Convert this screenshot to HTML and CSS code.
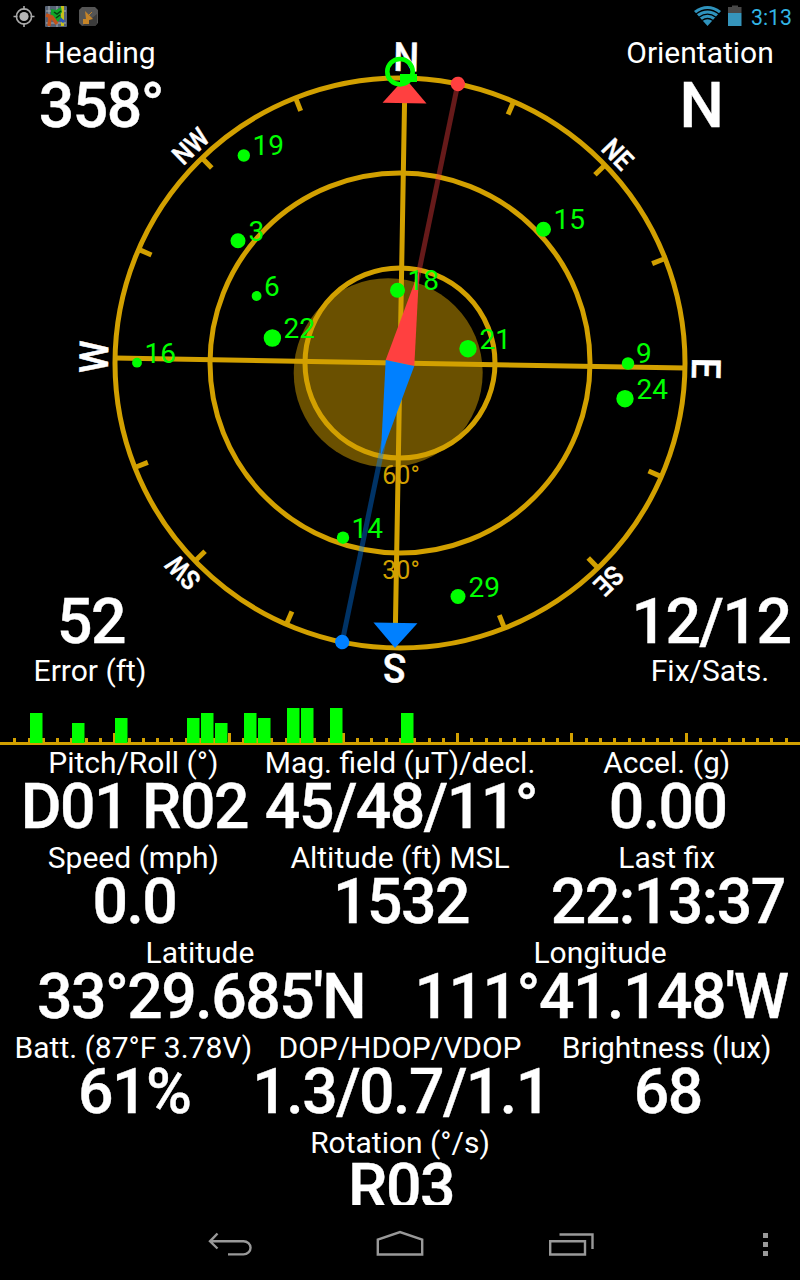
FILE: index.html
```html
<!DOCTYPE html>
<html lang="en">
<head>
    <meta charset="utf-8">
    <title>GPS Status</title>
    <link rel="stylesheet" href="styles.css">
</head>
<body>
    <header class="statusbar">
        <svg class="notifications" width="110" height="32" viewBox="0 0 110 32">
            <g fill="none" stroke="#a9a9a9" stroke-width="1.6">
                <circle cx="24" cy="16.500" r="7.600"/>
                <path d="M24 6v4M24 23v4M13.500 16.500h4M30.500 16.500h4"/>
            </g>
            <circle cx="24" cy="16.500" r="4.600" fill="#b5b5b5"/>
            <rect x="45" y="6" width="22" height="21" rx="1" fill="#566275"/>
            <path d="M46 11h20M46 23h20M49 6v21M57 6v21" stroke="#aab0b4" stroke-width="1"/>
            <path d="M62.500 6v20" stroke="#c9c21a" stroke-width="3"/>
            <path d="M51 9l5 1 5-3 1 5-2 3 2 4-5 3-6-6z" fill="#0fa52a"/>
            <path d="M54 12l3 2 4-3M56 18l4-3" stroke="#063f10" stroke-width="1.500" fill="none"/>
            <path d="M46 15l6 2 5 7M50 17l-1 9" stroke="#c2521b" stroke-width="3.500" fill="none"/>
            <path d="M60 19l4 3" stroke="#2a55c0" stroke-width="3"/>
            <path d="M79 10l3-3h13l3 3v13l-3 3h-13l-3-3z" fill="#555"/>
            <path d="M82 26l15-12v10l-2 2z" fill="#3c3c3c"/>
            <path d="M85 11l8 8-4 1v4h-6v-5h3z" fill="#c58428"/>
            <path d="M89 15l3-3" stroke="#c58428"/>
        </svg>
        <div class="status">
            <svg width="48" height="32" viewBox="0 0 48 32">
                <path d="M0 11Q13.500 1 27 11L13.500 26z" fill="#2f93bd"/>
                <path d="M2 14Q13.500 5.500 25 14M5 17.300Q13.500 11 22 17.300M8 20.500Q13.500 16.500 19 20.500" fill="none" stroke="#000" stroke-width="1.300"/>
                <path d="M34 7h4V5.500h6V7h3.500v6H34z" fill="#484848"/>
                <path d="M34 13h13.500v13H34z" fill="#3594bb"/>
            </svg>
            <span class="clock">3:13</span>
        </div>
    </header>

    <main class="app">
        <section class="radar">
            <svg class="compass" width="800" height="668" viewBox="0 32 800 668">
                <circle cx="388.200" cy="372.700" r="94.500" class="tilt"/>
                <g transform="translate(400 363)">
                    <g class="grid-lines">
                        <circle r="285"/>
                        <circle r="190"/>
                        <circle r="95"/>
                        <g transform="rotate(1)">
                            <path d="M0 -262V262M-285 0H285"/>
                            <path id="tick" d="M0 -285V-271" transform="rotate(22.500)"/>
                            <use href="#tick" transform="rotate(22.500)"/>
                            <use href="#tick" transform="rotate(45)"/>
                            <use href="#tick" transform="rotate(90)"/>
                            <use href="#tick" transform="rotate(112.500)"/>
                            <use href="#tick" transform="rotate(135)"/>
                            <use href="#tick" transform="rotate(180)"/>
                            <use href="#tick" transform="rotate(202.500)"/>
                            <use href="#tick" transform="rotate(225)"/>
                            <use href="#tick" transform="rotate(270)"/>
                            <use href="#tick" transform="rotate(292.500)"/>
                            <use href="#tick" transform="rotate(315)"/>
                        </g>
                    </g>
                    <g class="ring-text">
                        <text x="1" y="121">60°</text>
                        <text x="1" y="216">30°</text>
                    </g>
                    <g transform="rotate(1)">
                        <g class="cardinal">
                            <text x="1" y="-292" transform="scale(.9 1)">N</text>
                            <text y="-292" transform="rotate(90) scale(.93 1)">E</text>
                            <text y="-291" transform="rotate(180) scale(.95 1)">S</text>
                            <text x="1" y="-292" transform="rotate(270) scale(.92 1)">W</text>
                        </g>
                        <g class="ordinal">
                            <text x="1" y="-292" transform="rotate(45) scale(.9 1)">NE</text>
                            <text x="1" y="-292" transform="rotate(135) scale(.9 1)">SE</text>
                            <text y="-292" transform="rotate(225) scale(.9 1)">SW</text>
                            <text y="-292" transform="rotate(315) scale(.9 1)">NW</text>
                        </g>
                        <path class="red" d="M0 -285L22 -260H-22z"/>
                        <path class="blue" d="M0 285L22 260H-22z"/>
                    </g>
                    <!-- magnetic needle -->
                    <g transform="rotate(11.700)">
                        <path class="red-line" d="M0 -285V-80"/>
                        <path class="blue-line" d="M0 285V80"/>
                        <path class="red" d="M-14.600 0L0 -95L14.600 0z"/>
                        <path class="blue" d="M-14.600 0L0 95L14.600 0z"/>
                        <circle class="red" cy="-285" r="7.200"/>
                        <circle class="blue" cy="285" r="7.200"/>
                    </g>
                </g>
                <circle cx="400" cy="71.700" r="12.700" class="sun"/>
                <rect x="400" y="74" width="17" height="8" fill="#0f0"/>
                <g class="sats">
                    <circle cx="243.800" cy="155.500" r="6.200"/><text x="252.500" y="155">19</text>
                    <circle cx="238" cy="240.800" r="7.500"/><text x="248.500" y="241">3</text>
                    <circle cx="256.600" cy="296" r="4.900"/><text x="264" y="296">6</text>
                    <circle cx="272.400" cy="338" r="8.700"/><text x="283.500" y="338">22</text>
                    <circle cx="137" cy="362.700" r="4.900"/><text x="144.500" y="363">16</text>
                    <circle cx="397.500" cy="290.300" r="7.500"/><text x="407.500" y="290">18</text>
                    <circle cx="468" cy="348.700" r="8.700"/><text x="479.500" y="349">21</text>
                    <circle cx="543.500" cy="229.300" r="7.500"/><text x="553.500" y="229">15</text>
                    <circle cx="628" cy="363.500" r="6.200"/><text x="636" y="363">9</text>
                    <circle cx="625" cy="398.700" r="8.700"/><text x="636.500" y="399">24</text>
                    <circle cx="343" cy="537.700" r="6.200"/><text x="351.500" y="538">14</text>
                    <circle cx="458" cy="596.500" r="7.500"/><text x="468.500" y="597">29</text>
                </g>
            </svg>
            <div class="corner heading">
                <div class="label">Heading</div>
                <div class="value">358°</div>
            </div>
            <div class="corner orientation">
                <div class="label">Orientation</div>
                <div class="value">N</div>
            </div>
            <div class="corner error">
                <div class="value">52</div>
                <div class="label">Error (ft)</div>
            </div>
            <div class="corner fix">
                <div class="value">12/12</div>
                <div class="label">Fix/Sats.</div>
            </div>
        </section>

        <svg class="signal" id="signal" width="800" height="45" viewBox="0 700 800 45"></svg>

        <section class="readouts">
            <div class="row">
                <div class="cell"><div class="label">Pitch/Roll (°)</div><div class="value">D01 R02</div></div>
                <div class="cell"><div class="label">Mag. field (µT)/decl.</div><div class="value">45/48/11°</div></div>
                <div class="cell"><div class="label">Accel. (g)</div><div class="value">0.00</div></div>
            </div>
            <div class="row">
                <div class="cell"><div class="label">Speed (mph)</div><div class="value">0.0</div></div>
                <div class="cell"><div class="label">Altitude (ft) MSL</div><div class="value">1532</div></div>
                <div class="cell"><div class="label">Last fix</div><div class="value">22:13:37</div></div>
            </div>
            <div class="row">
                <div class="cell"><div class="label">Latitude</div><div class="value">33°29.685'N</div></div>
                <div class="cell"><div class="label">Longitude</div><div class="value">111°41.148'W</div></div>
            </div>
            <div class="row">
                <div class="cell"><div class="label">Batt. (87°F 3.78V)</div><div class="value">61%</div></div>
                <div class="cell"><div class="label">DOP/HDOP/VDOP</div><div class="value">1.3/0.7/1.1</div></div>
                <div class="cell"><div class="label">Brightness (lux)</div><div class="value">68</div></div>
            </div>
            <div class="row">
                <div class="cell"><div class="label">Rotation (°/s)</div><div class="value">R03</div></div>
            </div>
        </section>
    </main>

    <nav class="navbar">
        <svg width="46" height="28" viewBox="207 1230 46 28">
            <path d="M210 1241.300H243.500a7 6.500 0 0 1 0 13.100H228M217.500 1233.500L210 1241.300L217.500 1248.500"/>
        </svg>
        <svg width="50" height="28" viewBox="375 1230 50 28">
            <path d="M377.800 1254.500V1239.500L400 1232L422.200 1239.500V1254.500z"/>
        </svg>
        <svg width="48" height="28" viewBox="547 1230 48 28">
            <path d="M550.200 1241.200H585V1254.500H550.200zM559.500 1234.500H592.500V1249"/>
        </svg>
        <div class="overflow"><i></i><i></i><i></i></div>
    </nav>

    <script>
        // satellite id -> bar height
        const bars = {3: 30, 6: 20, 9: 25, 14: 25, 15: 30, 16: 20, 18: 30, 19: 25, 21: 35, 22: 35, 24: 35, 29: 30};
        const step = 800 / 56;
        let out = '<rect class="axis" x="0" y="742" width="800" height="3"/>';

        for (let i = 1; i < 56; i++) {
            const h = i % 8 == 0 ? 10 : 5;
            out += `<rect class="axis" x="${Math.round(i * step - 1)}" y="${743 - h}" width="3" height="${h}"/>`;
        }
        for (const id in bars) {
            out += `<rect class="bar" x="${Math.round((id - 1) * step + 1)}" y="${743 - bars[id]}" width="12.500" height="${bars[id]}"/>`;
        }
        document.getElementById('signal').innerHTML = out;
    </script>
</body>
</html>
```
FILE: styles.css
```css
* {
    box-sizing: border-box;
}

body {
    margin: 0;
    width: 800px;
    height: 1280px;
    overflow: hidden;
    display: flex;
    flex-direction: column;
    background: #000;
    color: #fff;
    font-family: Roboto, sans-serif;
}

svg {
    display: block;
}

.statusbar {
    height: 32px;
    display: flex;
    justify-content: space-between;
}

.status {
    display: flex;
    gap: 9px;
    padding-right: 8px;
}

.clock {
    color: #33b5e5;
    font-size: 21.3px;
    line-height: 35px;
}

.app {
    height: 1173px;
    overflow: hidden;
}

.radar {
    height: 668px;
    display: grid;
    grid-template-columns: 200px 1fr 200px;
    grid-template-rows: 1fr 1fr;
}

.compass {
    grid-area: 1 / 1 / 3 / 4;
}

.corner {
    text-align: center;
}

.heading {
    grid-area: 1 / 1;
    padding-top: 3px;
}

.orientation {
    grid-area: 1 / 3;
    padding-top: 3px;
}

.error {
    grid-area: 2 / 1;
    align-self: end;
    padding: 0 20px 12px 0;
}

.fix {
    grid-area: 2 / 3;
    align-self: end;
    padding: 0 0 12px 20px;
}

.label {
    height: 35px;
    font-size: 30px;
    line-height: 35px;
    white-space: nowrap;
}

.value {
    height: 60px;
    padding-left: 2px;
    font-size: 62.5px;
    font-weight: 500;
    line-height: 54px;
    letter-spacing: -1.5px;
    white-space: nowrap;
    -webkit-text-stroke: 0.4px #fff;
}

.heading .value,
.orientation .value {
    padding-top: 9px;
}

.error .value,
.fix .value {
    padding-top: 2px;
}

.row {
    height: 95px;
    display: flex;
}

.cell {
    flex: 1 1 0;
    min-width: 0;
    display: flex;
    flex-direction: column;
    align-items: center;
}

/* compass */
.tilt {
    fill: #6a5000;
}

.grid-lines {
    fill: none;
    stroke: #d2a000;
    stroke-width: 5;
}

.ring-text {
    fill: #d2a000;
    font-size: 25px;
    text-anchor: middle;
}

.cardinal,
.ordinal {
    fill: #fff;
    stroke: #fff;
    stroke-width: 0.5;
    font-weight: 500;
    text-anchor: middle;
}

.cardinal {
    font-size: 40px;
}

.ordinal {
    font-size: 27px;
}

.red {
    fill: #ff4040;
}

.blue {
    fill: #0080ff;
}

.red-line,
.blue-line {
    fill: none;
    stroke: #ff4040;
    stroke-width: 5;
    opacity: 0.4;
}

.blue-line {
    stroke: #0080ff;
}

.sun {
    fill: none;
    stroke: #0f0;
    stroke-width: 4.6;
}

.sats {
    fill: #0f0;
    font-size: 28px;
}

/* signal strength */
.axis {
    fill: #d2a000;
}

.bar {
    fill: #0f0;
}

/* system buttons */
.navbar {
    height: 75px;
    padding: 25px 32px 0 207px;
    display: flex;
}

.navbar svg {
    fill: none;
    stroke: #999;
    stroke-width: 2.4;
    margin-right: 122px;
}

.navbar svg:nth-child(3) {
    margin-right: auto;
}

.overflow {
    display: flex;
    flex-direction: column;
    gap: 4px;
    padding-top: 3px;
}

.overflow i {
    width: 5px;
    height: 5px;
    background: #999;
}
```
